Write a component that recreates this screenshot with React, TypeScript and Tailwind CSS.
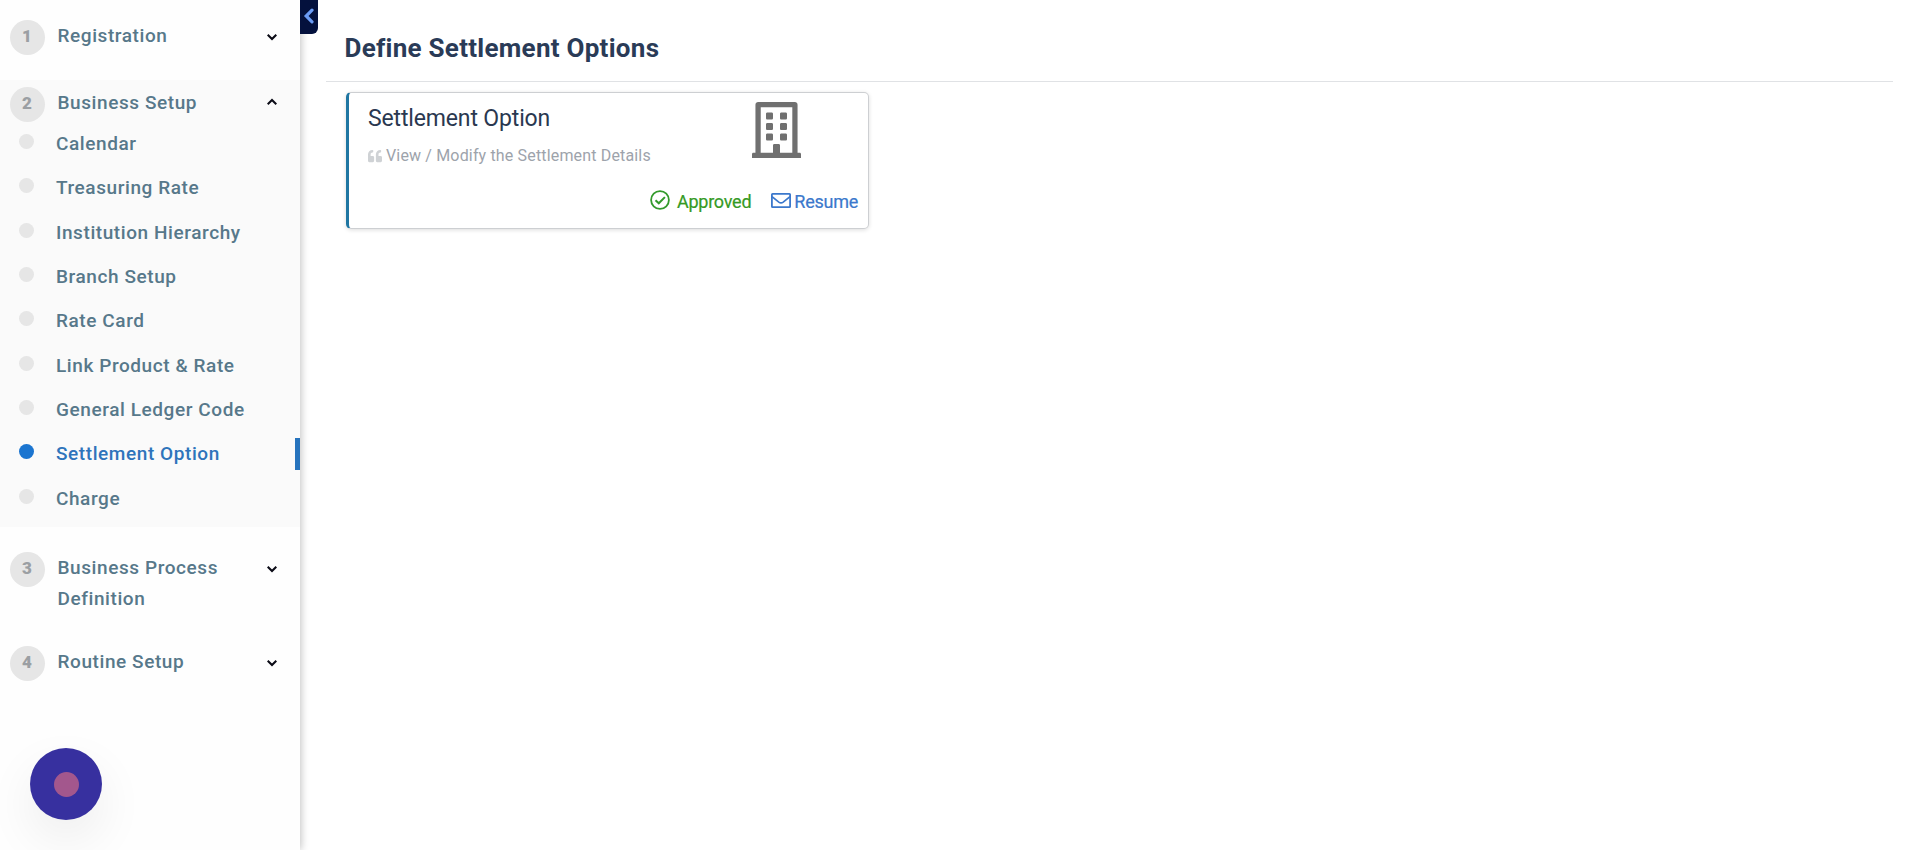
import React from "react";
import { FaRegBuilding, FaQuoteLeft } from "react-icons/fa";

function Chevron({ up = false }: { up?: boolean }) {
  return (
    <svg viewBox="0 0 10 8" className="h-2 w-2.5" fill="none" stroke="#0b0b16" strokeWidth="2.1">
      <path d={up ? "M0.7 6.2L5 1.9L9.3 6.2" : "M0.7 1.8L5 6.1L9.3 1.8"} />
    </svg>
  );
}

function CheckCircle() {
  return (
    <svg viewBox="0 0 20 20" className="mr-[7px] size-5" fill="none" stroke="#339a2c" strokeWidth="1.8">
      <circle cx="10" cy="10" r="8.9" />
      <path d="M5.5 10.2L8.8 13.3L14.9 7.1" strokeWidth="2" />
    </svg>
  );
}

function Envelope() {
  return (
    <svg viewBox="0 0 20 15" className="mr-[3px] ml-5 h-[15px] w-5" fill="none" stroke="#3b78cc" strokeWidth="1.8">
      <rect x="0.9" y="0.9" width="18.2" height="13.2" rx="0.6" />
      <path d="M1 3.6L7.8 9.1Q10 10.6 12.2 9.1L19 3.6" strokeWidth="1.7" />
    </svg>
  );
}

function Step({ n, label, open = false }: { n: number; label: string; open?: boolean }) {
  return (
    <div className="flex items-start pl-2.5 pr-[23.5px]">
      <span className="flex size-[35px] shrink-0 items-center justify-center rounded-full bg-[#e6e6e6] pr-px pb-px text-[17px] font-black text-[#9b9fa3]">
        {n}
      </span>
      <span className="ml-[12.5px] w-[184px] text-[19px] leading-[31px] font-medium tracking-[0.58px] text-[#57788a]">
        {label}
      </span>
      <span className={"ml-auto " + (open ? "mt-[11px]" : "mt-[13px]")}>
        <Chevron up={open} />
      </span>
    </div>
  );
}

const items = [
  "Calendar",
  "Treasuring Rate",
  "Institution Hierarchy",
  "Branch Setup",
  "Rate Card",
  "Link Product & Rate",
  "General Ledger Code",
  "Settlement Option",
  "Charge",
];

function Item({ label, active }: { label: string; active: boolean }) {
  return (
    <li className="flex h-[44.35px] items-start">
      <span className={"mt-1.5 ml-[19px] size-[15px] rounded-full " + (active ? "bg-[#1b75d0]" : "bg-[#e6e6e6]")} />
      <span
        className={
          "ml-[22px] text-[19px] leading-8 font-medium tracking-[0.58px] " +
          (active ? "text-[#2e74bb]" : "text-[#57788a]")
        }
      >
        {label}
      </span>
      {active && <span className="ml-auto h-8 w-[5px] bg-[#2673bd]" />}
    </li>
  );
}

export default function App() {
  return (
    <div className="flex h-[850px] w-full overflow-hidden bg-white font-['Roboto',sans-serif]">
      <aside className="relative z-10 flex w-[300px] shrink-0 flex-col bg-[#fefefe] shadow-[1px_0_8px_rgba(0,0,0,0.25)]">
        <div className="h-20 pt-5">
          <Step n={1} label="Registration" />
        </div>
        <div className="h-[447px] bg-[#fafafa] pt-[7px]">
          <div className="h-10">
            <Step n={2} label="Business Setup" open />
          </div>
          <ul className="pt-px">
            {items.map((label) => (
              <Item key={label} label={label} active={label === "Settlement Option"} />
            ))}
          </ul>
        </div>
        <div className="h-[119px] pt-[25px]">
          <Step n={3} label="Business Process Definition" />
        </div>
        <Step n={4} label="Routine Setup" />
        <button className="absolute top-[748px] left-[30px] flex size-[72px] items-center justify-center rounded-full bg-[#37309f] shadow-[0_20px_50px_rgba(0,0,0,0.07)]">
          <span className="size-[25px] rounded-full bg-[#a3578d]" />
        </button>
        <button className="absolute top-0 left-[300px] flex h-[34px] w-[18px] items-center justify-center rounded-br-md bg-[#04113d] pb-[3px]">
          <svg viewBox="0 0 12 16" className="h-4 w-3" fill="none" stroke="#6b9cf5" strokeWidth="3.2" strokeLinecap="round">
            <path d="M9 2.2L3.2 8L9 13.8" />
          </svg>
        </button>
      </aside>
      <main className="min-w-0 flex-1 pr-[27px] pl-[26px]">
        <header className="flex h-[82px] items-center border-b border-[#e0e2e5] pt-[15px] pl-[18.5px]">
          <h1 className="text-[26px] leading-8 font-bold tracking-[0.27px] text-[#2a3b57]">Define Settlement Options</h1>
        </header>
        <section className="mt-2.5 ml-5 flex h-[137px] w-[523px] flex-col rounded-[5px] border border-l-[3px] border-[#cdcfd2] border-l-[#1f76a2] bg-white shadow-[0_1px_4px_rgba(0,0,0,0.14)]">
          <div className="flex justify-between pr-[67px] pl-[19px]">
            <div>
              <h2 className="mt-2.5 text-[23px] leading-8 tracking-[-0.15px] text-[#2a3850]">Settlement Option</h2>
              <p className="mt-[9px] flex items-center text-base leading-6 tracking-[0.16px] text-[#9da3ab]">
                <FaQuoteLeft size={14} className="mr-1 text-[#cfd2d5]" />
                View / Modify the Settlement Details
              </p>
            </div>
            <FaRegBuilding className="mt-[9px] h-14 w-[49px] text-[#707070]" />
          </div>
          <div className="mt-[18px] flex h-7 items-center justify-end pr-2.5 text-lg leading-7 tracking-[-0.25px]">
            <CheckCircle />
            <span className="pt-[3px] text-[#359a24] [-webkit-text-stroke:0.2px]">Approved</span>
            <Envelope />
            <span className="pt-[3px] text-[#3b78cc] [-webkit-text-stroke:0.2px]">Resume</span>
          </div>
        </section>
      </main>
    </div>
  );
}
